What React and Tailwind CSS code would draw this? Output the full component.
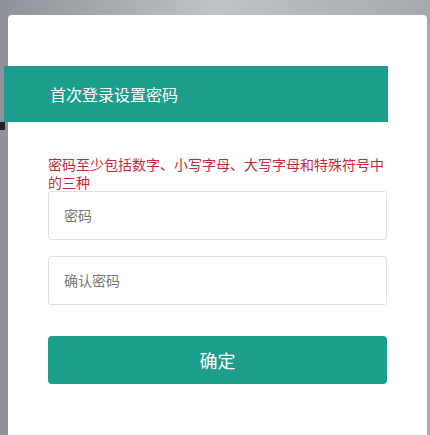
import React from 'react';

export default function App() {
  return (
    <div
      className="relative w-[430px] h-[435px] overflow-hidden bg-gradient-to-r from-[#8f9298] via-[#bfc2c6] to-[#a6a9ae]"
      style={{ fontFamily: '"Noto Sans CJK SC", "Noto Sans", sans-serif' }}
    >
      {/* fold shadow under the ribbon */}
      <div className="absolute left-0 top-[122px] w-[5px] h-[8px] bg-[#1f2226]" />

      <div className="ml-[8px] mt-[15px] w-[419px] h-[420px] bg-white rounded-t-[4px] pt-[51px]">
        {/* Header ribbon */}
        <div className="-ml-[4px] w-[384px] h-[56px] bg-[#1b9e8c] flex items-center pl-[46px]">
          <span className="text-[16px] text-white leading-none">首次登录设置密码</span>
        </div>

        <div className="px-[40px] pt-[33px]">
          <p className="text-[14px] leading-[18px] text-[#c8283a]">
            密码至少包括数字、小写字母、大写字母和特殊符号中的三种
          </p>

          <div className="h-[49px] border border-[#e0e0e0] rounded-[3px] flex items-center pl-[15px]">
            <span className="text-[14px] text-[#777]">密码</span>
          </div>

          <div className="mt-[16px] h-[49px] border border-[#e0e0e0] rounded-[3px] flex items-center pl-[15px]">
            <span className="text-[14px] text-[#777]">确认密码</span>
          </div>

          <button className="mt-[31px] w-full h-[48px] bg-[#1b9e8c] rounded-[4px] flex items-center justify-center">
            <span className="text-[18px] text-white">确定</span>
          </button>
        </div>
      </div>
    </div>
  );
}
